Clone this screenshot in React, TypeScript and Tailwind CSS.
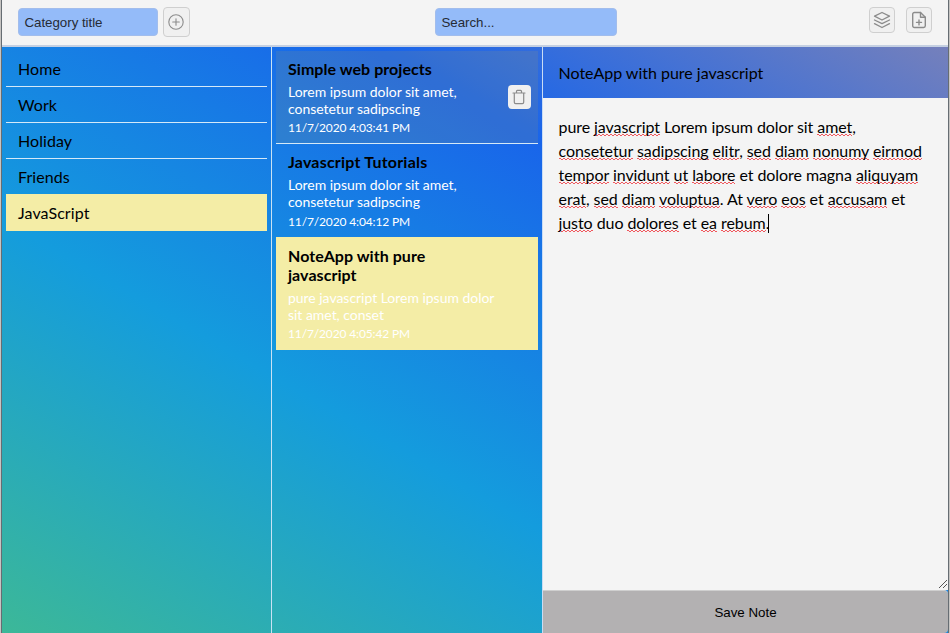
import { Fragment } from "react";

const categories = ["Home", "Work", "Holiday", "Friends", "JavaScript"];

type Note = { title: string; body: string; date: string; state: string };
const notes: Note[] = [
  { title: "Simple web projects", body: "Lorem ipsum dolor sit amet, consetetur sadipscing", date: "11/7/2020 4:03:41 PM", state: "hover" },
  { title: "Javascript Tutorials", body: "Lorem ipsum dolor sit amet, consetetur sadipscing", date: "11/7/2020 4:04:12 PM", state: "idle" },
  { title: "NoteApp with pure javascript", body: "pure javascript Lorem ipsum dolor sit amet, conset", date: "11/7/2020 4:05:42 PM", state: "active" },
];

// Words between underscores are flagged by the spell checker.
const lines = [
  "pure _javascript_ Lorem ipsum dolor sit _amet_,",
  "_consetetur_ _sadipscing_ _elitr_, _sed_ _diam_ _nonumy_ _eirmod_",
  "_tempor_ _invidunt_ _ut_ _labore_ et dolore magna _aliquyam_",
  "_erat_, _sed_ _diam_ _voluptua_. At _vero_ _eos_ et _accusam_ et",
  "_justo_ duo _dolores_ et _ea_ _rebum_.",
];

function Line({ text }: { text: string }) {
  return (
    <div className="whitespace-nowrap">
      {text.split("_").map((part, i) =>
        i % 2 ? (
          <span
            key={i}
            className="bg-[linear-gradient(90deg,#f0595f_50%,transparent_50%),linear-gradient(90deg,transparent_50%,#f0595f_50%)] bg-[length:4px_1px,4px_1px] bg-[position:0_calc(100%_-_1px),0_100%] bg-repeat-x"
          >
            {part}
          </span>
        ) : (
          <Fragment key={i}>{part}</Fragment>
        )
      )}
    </div>
  );
}

const stroke = { fill: "none", stroke: "currentColor", strokeLinecap: "round", strokeLinejoin: "round" } as const;

function PlusCircle() {
  return (
    <svg className="size-4" viewBox="0 0 16 16" {...stroke} strokeWidth="1.1">
      <circle cx="8" cy="8" r="7.2" />
      <path d="M8 4.7v6.6M4.7 8h6.6" />
    </svg>
  );
}

function Layers() {
  return (
    <svg className="size-[18px]" viewBox="0 0 18 18" {...stroke} strokeWidth="1.3">
      <path d="M9 1.5 16.5 5.2 9 9 1.5 5.2Z" />
      <path d="M1.5 9 9 12.7 16.5 9M1.5 12.7 9 16.5 16.5 12.7" />
    </svg>
  );
}

function FilePlus() {
  return (
    <svg className="size-[18px]" viewBox="0 0 18 18" {...stroke} strokeWidth="1.4">
      <path d="M10.5 1.5H4.4a1.7 1.7 0 0 0-1.7 1.7v11.6a1.7 1.7 0 0 0 1.7 1.7h9.2a1.7 1.7 0 0 0 1.7-1.7V6.3Z" />
      <path d="M10.5 1.5v4.8h4.8M9 8.9v5M6.5 11.4h5" />
    </svg>
  );
}

function Trash() {
  return (
    <svg className="h-4 w-3.5" viewBox="0 0 14 16" {...stroke} strokeWidth="1.2">
      <path d="M1 4h12M4.5 4V2.2a.9.9 0 0 1 .9-.9h3.2a.9.9 0 0 1 .9.9V4M2.3 4v9.3a1.4 1.4 0 0 0 1.4 1.4h6.6a1.4 1.4 0 0 0 1.4-1.4V4" />
    </svg>
  );
}

export default function App() {
  return (
    <div className="flex h-[633px] w-[950px] overflow-hidden bg-[#c6c4c2] font-[Lato,sans-serif] text-black">
      <div className="w-px shrink-0" />
      <div className="flex w-[948px] flex-col border-x border-[#666d73] bg-[linear-gradient(30deg,#3cb898,#149cdd_35%,#1965ea_68%,#8284b5)]">
        <header className="flex h-[47px] shrink-0 items-start border-b-2 border-[#c5d0e2] bg-[#f4f4f4] pt-[7px] font-['Liberation_Sans',sans-serif] text-[13.33px] tracking-[-0.04px] text-[#262b35]">
          <div className="mt-px ml-4 flex h-7 w-[140px] items-center rounded border border-[#a2bdec] bg-[#94bbf9] pt-0.5 pl-[5.5px]">Category title</div>
          <button className="ml-[5px] flex h-[30px] w-[27px] items-center justify-center rounded border border-[#cfcfcf] bg-[#f0f0f0] pr-px text-[#8b8b8b]"><PlusCircle /></button>
          <div className="mt-px ml-[245px] flex h-7 w-[182px] items-center rounded border border-[#a2bdec] bg-[#94bbf9] pt-0.5 pl-[5.5px]">Search...</div>
          <button className="ml-[252px] flex h-[26px] w-[26px] items-center justify-center rounded border border-[#cfcfcf] bg-[#f0f0f0] text-[#8b8b8b]"><Layers /></button>
          <button className="ml-[11px] flex h-[26px] w-[26px] items-center justify-center rounded border border-[#cfcfcf] bg-[#f0f0f0] text-[#8b8b8b]"><FilePlus /></button>
        </header>
        <main className="flex min-h-0 flex-1">
          <nav className="w-[270px] shrink-0 border-r border-[#c9e2f4] pt-1 pr-1 pl-1">
            {categories.map((name, i) => (
              <div
                key={name}
                className={
                  "flex items-center px-3 text-base tracking-[0.08px] " +
                  (i === 4 ? "h-[37px] bg-[#f4eda6]" : i === 3 ? "h-[35px] pt-px" : "h-9 border-b border-[#d5e9f8]")
                }
              >
                {name}
              </div>
            ))}
          </nav>
          <section className="w-[271px] shrink-0 border-r border-[#c9dcf4] px-1 pt-1">
            {notes.map((n) => (
              <article
                key={n.title}
                className={
                  "flex items-center justify-between pr-[7px] pl-3 " +
                  (n.state === "hover"
                    ? "h-[93px] border-b border-[#d5e9f8] bg-[#b0a060]/15"
                    : n.state === "active"
                      ? "h-[113px] bg-[#f4eda6]"
                      : "h-[93px]")
                }
              >
                <div className="w-[209px]">
                  <h2 className={"w-[180px] text-base leading-[19px] font-bold " + (n.state === "idle" ? "-mt-px tracking-[0.2px]" : "tracking-[0.05px]")}>{n.title}</h2>
                  <p className={"text-sm leading-[17px] tracking-[-0.03px] text-white " + (n.state === "idle" ? "mt-[5px]" : "mt-[5px] -mb-px")}>{n.body}</p>
                  <time className="mt-1 block text-xs leading-[15px] tracking-[-0.14px] text-white">{n.date}</time>
                </div>
                {n.state === "hover" && (
                  <button className="flex h-6 w-[23px] items-center justify-center rounded bg-[#f0f0f0] pr-px text-[#8b8b8b]"><Trash /></button>
                )}
              </article>
            ))}
          </section>
          <section className="flex min-w-0 flex-1 flex-col">
            <div className="flex h-[51px] shrink-0 items-center px-[15.5px] text-base tracking-[-0.01px]">NoteApp with pure javascript</div>
            <div className="flex min-h-0 flex-1 flex-col justify-between bg-[#f4f4f4]">
              <div className="px-[15.5px] pt-[17px] text-base leading-6 tracking-[-0.07px]">
                {lines.map((l, i) =>
                  i === 4 ? (
                    <div key={l} className="flex items-center"><Line text={l} /><span className="-ml-px h-[19px] w-px bg-black" /></div>
                  ) : (
                    <Line key={l} text={l} />
                  )
                )}
              </div>
              <svg className="mb-px size-2.5 self-end" viewBox="0 0 10 10" fill="none" stroke="#555" strokeWidth="1">
                <path d="M1 9 9 1M5 9 9 5" />
              </svg>
            </div>
            <button className="h-[43px] shrink-0 rounded-r border-t border-[#cfcfcf] bg-[#b3b1b2] pt-0.5 font-['Liberation_Sans',sans-serif] text-[13.33px]">Save Note</button>
          </section>
        </main>
      </div>
    </div>
  );
}
